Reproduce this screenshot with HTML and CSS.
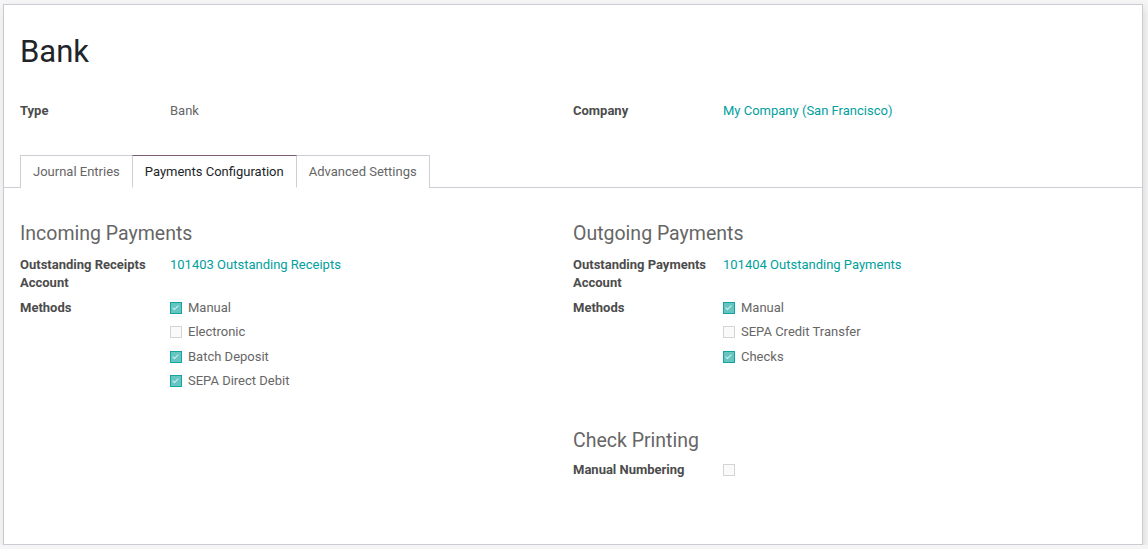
FILE: index.html
```html
<!DOCTYPE html>
<html>
<head>
<meta charset="utf-8">
<link rel="stylesheet" href="styles.css">
</head>
<body>
<div class="sheet">
  <h1 class="title">Bank</h1>
  <div class="cols head-fields">
    <div class="field"><div class="label">Type</div><div class="value">Bank</div></div>
    <div class="field"><div class="label">Company</div><div class="value link">My Company (San Francisco)</div></div>
  </div>
  <ul class="tabs">
    <li class="tab">Journal Entries</li>
    <li class="tab active">Payments Configuration</li>
    <li class="tab">Advanced Settings</li>
  </ul>
  <div class="cols pane">
    <div class="col">
      <h2 class="sep">Incoming Payments</h2>
      <div class="field"><div class="label">Outstanding Receipts Account</div><div class="value link">101403 Outstanding Receipts</div></div>
      <div class="field methods"><div class="label">Methods</div>
        <div class="value checks">
          <div class="chk"><span class="box on"></span>Manual</div>
          <div class="chk"><span class="box"></span>Electronic</div>
          <div class="chk"><span class="box on"></span>Batch Deposit</div>
          <div class="chk"><span class="box on"></span>SEPA Direct Debit</div>
        </div>
      </div>
    </div>
    <div class="col">
      <h2 class="sep">Outgoing Payments</h2>
      <div class="field"><div class="label">Outstanding Payments Account</div><div class="value link">101404 Outstanding Payments</div></div>
      <div class="field methods"><div class="label">Methods</div>
        <div class="value checks">
          <div class="chk"><span class="box on"></span>Manual</div>
          <div class="chk"><span class="box"></span>SEPA Credit Transfer</div>
          <div class="chk"><span class="box on"></span>Checks</div>
        </div>
      </div>
      <h2 class="sep second">Check Printing</h2>
      <div class="field single"><div class="label">Manual Numbering</div><div class="value"><span class="box"></span></div></div>
    </div>
  </div>
</div>
</body>
</html>
```
FILE: styles.css
```css
html, body {
  margin: 0;
  padding: 0;
  background: #f5f5f5;
  font-family: Roboto, "Liberation Sans", sans-serif;
  font-size: 13px;
  color: #666;
}
.sheet {
  box-sizing: border-box;
  margin: 4px 0 0 3px;
  width: 1140px;
  height: 541px;
  background: #fff;
  border: 1px solid #c9ccd2;
  box-shadow: 2px 4px 8px rgba(0,0,0,0.1);
  padding: 0 16px;
}
.title {
  margin: 0;
  padding-top: 29px;
  font-size: 31px;
  font-weight: 400;
  line-height: 36px;
  color: #212529;
}
.cols {
  display: grid;
  grid-template-columns: 553px 553px;
}
.head-fields {
  margin-top: 32px;
}
.field {
  display: flex;
  line-height: 18px;
}
.label {
  width: 150px;
  flex: none;
  box-sizing: border-box;
  padding-right: 14px;
  font-weight: 700;
  color: #4c4c4c;
}
.value {
  color: #666;
}
.link {
  color: #00a09d;
}
.tabs {
  list-style: none;
  display: flex;
  margin: 35px -16px 0;
  padding: 0 0 0 16px;
  border-bottom: 1px solid #ccd0d5;
}
.tab {
  border: 1px solid #ccd0d5;
  border-bottom: none;
  margin-bottom: -1px;
  padding: 0 12px;
  line-height: 31px;
  color: #666;
  background: #fff;
}
.tab + .tab {
  margin-left: -1px;
}
.tab.active {
  border-top-color: #7c5d74;
  color: #212529;
  border-bottom: 1px solid #fff;
  position: relative;
  z-index: 1;
}
.pane {
  padding-top: 34px;
}
.sep {
  margin: 0 0 10px;
  font-size: 19.5px;
  font-weight: 400;
  line-height: 24px;
  color: #666;
}
.sep.second {
  margin-top: 63px;
  margin-bottom: 8px;
}
.methods {
  margin-top: 7px;
}
.checks {
  display: flex;
  flex-direction: column;
  gap: 6.33px;
}
.chk {
  display: flex;
  align-items: center;
  line-height: 18px;
}
.box {
  display: inline-block;
  box-sizing: border-box;
  width: 12px;
  height: 12px;
  border: 1px solid #d4d4d4;
  background: #fafafa;
  margin-right: 6px;
  position: relative;
  vertical-align: middle;
}
.box.on {
  border-color: #14a39f;
  background: #66c4c1;
}
.box.on::after {
  content: "";
  position: absolute;
  left: 3px;
  top: 1px;
  width: 2px;
  height: 5px;
  border: solid #d8f1f0;
  border-width: 0 1.5px 1.5px 0;
  transform: rotate(45deg);
}
.single .value {
  display: flex;
  align-items: center;
}
```
